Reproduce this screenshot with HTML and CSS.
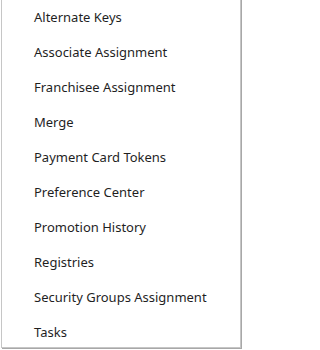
FILE: index.html
```html
<!DOCTYPE html>
<html>
<head>
<meta charset="utf-8">
<link rel="stylesheet" href="styles.css">
</head>
<body>
<div class="menu">
  <ul class="menu-list">
    <li class="menu-item">Alternate Keys</li>
    <li class="menu-item">Associate Assignment</li>
    <li class="menu-item">Franchisee Assignment</li>
    <li class="menu-item">Merge</li>
    <li class="menu-item">Payment Card Tokens</li>
    <li class="menu-item">Preference Center</li>
    <li class="menu-item">Promotion History</li>
    <li class="menu-item">Registries</li>
    <li class="menu-item">Security Groups Assignment</li>
    <li class="menu-item">Tasks</li>
  </ul>
</div>
</body>
</html>
```

FILE: styles.css
```css
html, body {
  margin: 0;
  padding: 0;
  background: #ffffff;
}
body {
  width: 242px;
  height: 350px;
  overflow: hidden;
}
.menu {
  margin-top: -3px;
  margin-left: 1px;
  width: 238px;
  border: 1px solid #c6c6c6;
  border-top: none;
  background: #ffffff;
  box-shadow: 1px 1px 0 #a8a8a8;
}
.menu-list {
  list-style: none;
  margin: 0;
  padding: 0;
}
.menu-item {
  box-sizing: border-box;
  height: 35px;
  padding-top: 5px;
  line-height: 30px;
  padding-left: 32px;
  font-family: "Noto Sans", sans-serif;
  font-size: 13px;
  color: #1f1f1f;
  white-space: nowrap;
}
```
